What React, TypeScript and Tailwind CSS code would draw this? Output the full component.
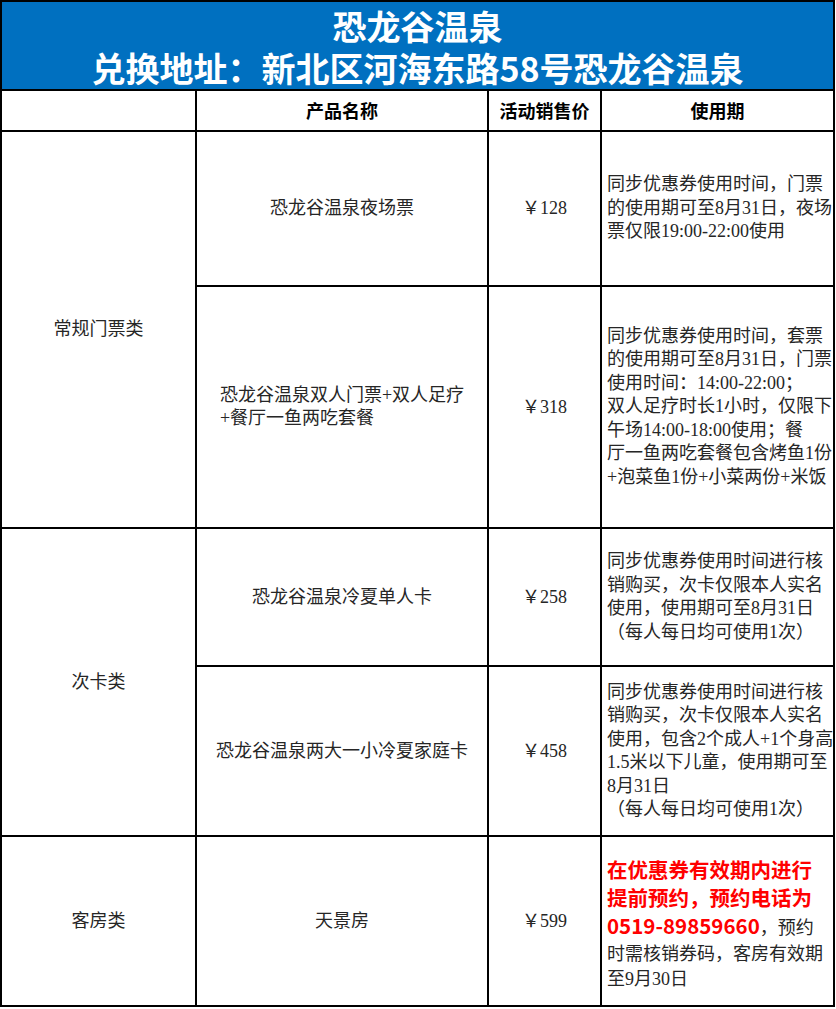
const sans = "font-['Noto_Sans_CJK_SC','Liberation_Sans',sans-serif]";
const song = "font-['Liberation_Serif','Noto_Sans_CJK_SC',serif]";

const Cell = ({ children, className = "" }: { children?: React.ReactNode; className?: string }) => (
  <div className={`bg-white flex items-center justify-center text-[18px] text-[#262626] ${song} ${className}`}>
    {children}
  </div>
);

const Lines = ({ lines }: { lines: string[] }) => (
  <div className="w-full pl-[5px] leading-[23.5px]">
    {lines.map((l, i) => (
      <div key={i} className="whitespace-nowrap">
        {l}
      </div>
    ))}
  </div>
);

export default function App() {
  return (
    <div className="w-[836px] h-[1009px] bg-white">
      <div className="grid w-[835px] grid-cols-[193px_290px_111px_231px] grid-rows-[87px_39px_153px_240px_136px_168px_168px] gap-[2px] bg-black p-[2px]">
        <div className={`col-span-4 bg-[#0070c0] pt-[3px] text-center text-white font-bold text-[34px] leading-[42px] ${sans}`}>
          恐龙谷温泉
          <br />
          兑换地址：新北区河海东路58号恐龙谷温泉
        </div>

        <div className="bg-white" />
        <div className={`bg-white flex items-center justify-center font-bold text-[18px] text-black ${sans}`}>产品名称</div>
        <div className={`bg-white flex items-center justify-center font-bold text-[18px] text-black ${sans}`}>活动销售价</div>
        <div className={`bg-white flex items-center justify-center font-bold text-[18px] text-black ${sans}`}>使用期</div>

        <Cell className="row-span-2">常规门票类</Cell>
        <Cell>恐龙谷温泉夜场票</Cell>
        <Cell>￥128</Cell>
        <Cell>
          <Lines lines={["同步优惠券使用时间，门票", "的使用期可至8月31日，夜场", "票仅限19:00-22:00使用"]} />
        </Cell>

        <Cell>
          <div className="text-left leading-[23px]">
            <div>恐龙谷温泉双人门票+双人足疗</div>
            <div>+餐厅一鱼两吃套餐</div>
          </div>
        </Cell>
        <Cell>￥318</Cell>
        <Cell>
          <Lines
            lines={[
              "同步优惠券使用时间，套票",
              "的使用期可至8月31日，门票",
              "使用时间：14:00-22:00；",
              "双人足疗时长1小时，仅限下",
              "午场14:00-18:00使用；餐",
              "厅一鱼两吃套餐包含烤鱼1份",
              "+泡菜鱼1份+小菜两份+米饭",
            ]}
          />
        </Cell>

        <Cell className="row-span-2">次卡类</Cell>
        <Cell>恐龙谷温泉冷夏单人卡</Cell>
        <Cell>￥258</Cell>
        <Cell>
          <Lines
            lines={[
              "同步优惠券使用时间进行核",
              "销购买，次卡仅限本人实名",
              "使用，使用期可至8月31日",
              "（每人每日均可使用1次）",
            ]}
          />
        </Cell>

        <Cell>恐龙谷温泉两大一小冷夏家庭卡</Cell>
        <Cell>￥458</Cell>
        <Cell>
          <Lines
            lines={[
              "同步优惠券使用时间进行核",
              "销购买，次卡仅限本人实名",
              "使用，包含2个成人+1个身高",
              "1.5米以下儿童，使用期可至",
              "8月31日",
              "（每人每日均可使用1次）",
            ]}
          />
        </Cell>

        <Cell>客房类</Cell>
        <Cell>天景房</Cell>
        <Cell>￥599</Cell>
        <Cell>
          <div className="w-full pl-[5px] pt-[4px]">
            <div className={`whitespace-nowrap font-bold text-[20.5px] leading-[28px] text-[#ff0000] ${sans}`}>在优惠券有效期内进行</div>
            <div className={`whitespace-nowrap font-bold text-[20.5px] leading-[28px] text-[#ff0000] ${sans}`}>提前预约，预约电话为</div>
            <div className="whitespace-nowrap leading-[28px]">
              <span className={`font-bold text-[20.5px] text-[#ff0000] ${sans}`}>0519-89859660</span>，预约
            </div>
            <div className="whitespace-nowrap leading-[25px]">时需核销券码，客房有效期</div>
            <div className="whitespace-nowrap leading-[24px]">至9月30日</div>
          </div>
        </Cell>
      </div>
    </div>
  );
}
